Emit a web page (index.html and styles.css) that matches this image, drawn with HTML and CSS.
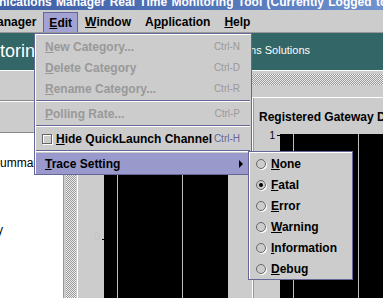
FILE: index.html
```html
<!DOCTYPE html>
<html>
<head>
<meta charset="utf-8">
<link rel="stylesheet" href="styles.css">
</head>
<body>
<div class="app">
  <div class="titlebar"><span class="title-text">nications Manager Real Time Monitoring Tool (Currently Logged to: 10.0.0.1)</span></div>
  <div class="menubar">
    <span class="mb-item first">Manager</span>
    <span class="mb-item active"><u>E</u>dit</span>
    <span class="mb-item"><u>W</u>indow</span>
    <span class="mb-item">A<u>p</u>plication</span>
    <span class="mb-item"><u>H</u>elp</span>
  </div>
  <div class="banner">
    <span class="banner-title">Monitoring</span>
    <span class="banner-sub">Communications Solutions</span>
  </div>
  <div class="main">
    <div class="tree">
      <div class="tree-head">
        <div class="tree-tool"></div>
        <div class="tree-tool"></div>
      </div>
      <div class="tree-body">
        <div class="tree-row r1">Summary</div>
        <div class="tree-row r2">y</div>
      </div>
    </div>
    <div class="vsplit"><div class="bumps"></div></div>
    <div class="right">
      <div class="hsplit"><div class="bumps"></div></div>
      <div class="charts">
        <div class="chart chart1">
          <div class="axis"><span class="axis-label zero">0</span><span class="tick tick1"></span></div>
          <div class="plot"><i class="grid g1"></i><i class="grid g2"></i></div>
          <div class="chart-margin"></div>
        </div>
        <div class="chart chart2">
          <div class="chart-title">Registered Gateway Devices</div>
          <div class="chart-body">
            <div class="axis axis2"><span class="axis-label one">1</span><span class="tick"></span></div>
            <div class="plot plot2"><i class="grid g3"></i><i class="grid g4"></i></div>
          </div>
        </div>
      </div>
    </div>
  </div>

  <div class="menu edit-menu">
    <div class="mi disabled"><span class="lbl"><u>N</u>ew Category...</span><span class="acc">Ctrl-N</span></div>
    <div class="mi disabled"><span class="lbl"><u>D</u>elete Category</span><span class="acc">Ctrl-D</span></div>
    <div class="mi disabled"><span class="lbl"><u>R</u>ename Category...</span><span class="acc">Ctrl-R</span></div>
    <div class="sep"></div>
    <div class="mi disabled"><span class="lbl"><u>P</u>olling Rate...</span><span class="acc">Ctrl-P</span></div>
    <div class="sep"></div>
    <div class="mi check"><span class="cb"></span><span class="lbl"><u>H</u>ide QuickLaunch Channel</span><span class="acc">Ctrl-H</span></div>
    <div class="sep"></div>
    <div class="mi sel"><span class="lbl"><u>T</u>race Setting</span><span class="arrow"></span></div>
  </div>

  <div class="menu sub-menu">
    <div class="ri"><span class="radio"></span><span><u>N</u>one</span></div>
    <div class="ri"><span class="radio on"></span><span><u>F</u>atal</span></div>
    <div class="ri"><span class="radio"></span><span><u>E</u>rror</span></div>
    <div class="ri"><span class="radio"></span><span><u>W</u>arning</span></div>
    <div class="ri"><span class="radio"></span><span><u>I</u>nformation</span></div>
    <div class="ri"><span class="radio"></span><span><u>D</u>ebug</span></div>
  </div>
</div>
</body>
</html>
```

FILE: styles.css
```css
* { box-sizing: border-box; }
html, body { margin: 0; padding: 0; }
body {
  width: 383px;
  height: 298px;
  overflow: hidden;
  background: #cccccc;
  font-family: "Liberation Sans", Arial, sans-serif;
}
.app {
  position: relative;
  width: 383px;
  height: 298px;
  overflow: hidden;
  display: flex;
  flex-direction: column;
}
.titlebar {
  height: 10px;
  flex: none;
  overflow: hidden;
  background: linear-gradient(90deg, #3f5fa8 0%, #5577bb 60%, #7093cf 100%);
}
.title-text {
  display: block;
  margin-top: -5px;
  margin-left: -1px;
  color: #ffffff;
  font: bold 12px/14px "Liberation Sans", Arial, sans-serif;
  word-spacing: 1px;
  white-space: nowrap;
}
.menubar {
  height: 23px;
  flex: none;
  display: flex;
  background: #cccccc;
  border-bottom: 1px solid #999999;
  font: bold 12px "Liberation Sans", Arial, sans-serif;
}
.mb-item {
  display: flex;
  align-items: center;
  padding: 0 7px;
  margin-top: 2px;
  color: #000;
}
.mb-item u { text-underline-offset: 1px; }
.mb-item.first { margin-left: -13px; padding-left: 0; }
.mb-item.active {
  background: #a3a3d3;
  border: 1px solid #666699;
  border-bottom: none;
  padding: 0 5px 0 5px;
  margin-left: 0;
}
.banner {
  height: 37px;
  flex: none;
  background: #336666;
  display: flex;
  align-items: flex-end;
  color: #fff;
}
.banner-title {
  font: 18px "Liberation Sans", Arial, sans-serif;
  margin-left: -39px;
  margin-bottom: 8px;
}
.banner-sub {
  margin-left: auto;
  margin-right: 73px;
  margin-bottom: 14px;
  font: 11px "Liberation Sans", Arial, sans-serif;
}
.main {
  flex: 1;
  display: flex;
  border-top: 1px solid #ffffff;
}
.tree {
  width: 64px;
  flex: none;
  display: flex;
  flex-direction: column;
  border-right: 1px solid #999999;
}
.tree-head {
  height: 62px;
  flex: none;
  border-bottom: 1px solid #888888;
}
.tree-tool {
  height: 30px;
  border-bottom: 1px solid #888888;
  box-shadow: 0 1px 0 #ffffff;
}
.tree-tool + .tree-tool { border-bottom: none; box-shadow: none; }
.tree-body {
  flex: 1;
  background: #ffffff;
  font: 12px "Liberation Sans", Arial, sans-serif;
  color: #000;
}
.tree-row { white-space: nowrap; }
.tree-row.r1 { margin-top: 23px; margin-left: -8px; }
.tree-row.r2 { margin-top: 53px; margin-left: -3px; }
.vsplit {
  width: 14px;
  flex: none;
  padding: 0 1px 0 2px;
  border-right: 1px solid #ffffff;
}
.bumps {
  width: 100%;
  height: 100%;
  background-color: #d8d8d8;
  background-image: repeating-conic-gradient(#9a9a9a 0 25%, #ececec 0 50%);
  background-size: 2px 2px;
}
.right {
  flex: 1;
  display: flex;
  flex-direction: column;
}
.hsplit {
  height: 15px;
  flex: none;
  padding: 3px 0 1px 0;
}
.charts {
  flex: 1;
  display: flex;
}
.chart {
  display: flex;
}
.chart1 {
  width: 172px;
  padding-top: 30px;
}
.axis {
  width: 26px;
  position: relative;
}
.axis-label {
  position: absolute;
  font: 10px "Liberation Sans", Arial, sans-serif;
}
.axis-label.zero { color: #c4c4c4; right: 4px; top: 115px; }
.plot {
  background: #000;
  position: relative;
}
.chart1 .plot { width: 124px; }
.chart-margin { flex: 1; }
.grid {
  position: absolute;
  top: 0;
  bottom: 0;
  width: 1px;
  background: #bdbdbd;
}
.g1 { left: 13px; }
.g2 { left: 78px; }
.chart2 {
  flex: 1;
  flex-direction: column;
  border-left: 1px solid #ffffff;
  margin-left: 2px;
  box-shadow: inset 1px 0 0 #999;
  border-top: 1px solid #ffffff;
  margin-top: 11px;
}
.chart-title {
  font: bold 12px "Liberation Sans", Arial, sans-serif;
  padding: 12px 0 0 6px;
  white-space: nowrap;
  height: 36px;
  color: #000;
}
.chart-body {
  flex: 1;
  display: flex;
  padding-left: 4px;
}
.axis2 { width: 23px; }
.axis-label.one { color: #000; right: 5px; top: -4px; }
.tick { position: absolute; right: 0; top: 1px; width: 3px; height: 1px; background: #000; }
.tick.tick1 { top: 123px; right: -1px; }
.plot2 { flex: 1; }
.g3 { left: 13px; }
.g4 { left: 78px; }

/* menus */
.menu {
  position: absolute;
  background: #cccccc;
  border: 1px solid #666699;
  box-shadow: inset 1px 1px 0 #ffffff;
  font: bold 12px "Liberation Sans", Arial, sans-serif;
}
.edit-menu {
  left: 34px;
  top: 33px;
  width: 218px;
  padding: 2px 1px 0 1px;
}
.mi {
  height: 21px;
  display: flex;
  align-items: center;
  padding: 0 10px 0 9px;
  color: #000;
}
.mi .lbl { flex: 1; white-space: nowrap; }
.mi .acc {
  font: 10px "Liberation Sans", Arial, sans-serif;
  color: #666699;
}
.mi.disabled .lbl, .mi.disabled .acc { color: #999999; }
.mi.check { padding-left: 6px; }
.cb {
  width: 10px;
  height: 10px;
  border: 1px solid #666666;
  box-shadow: inset 1px 1px 0 #ffffff, 1px 1px 0 #ffffff;
  margin-right: 4px;
  flex: none;
}
.mi.sel { background: #9999cc; }
.arrow {
  width: 0;
  height: 0;
  border-top: 4px solid transparent;
  border-bottom: 4px solid transparent;
  border-left: 4px solid #000;
  margin-right: -3px;
}
.sep {
  height: 4px;
  background: linear-gradient(to bottom, transparent 0 1px, #666699 1px 2px, #ffffff 2px 3px, transparent 3px);
}
.sub-menu {
  left: 248px;
  top: 151px;
  width: 105px;
  padding: 1px 1px 0 1px;
}
.ri {
  height: 21px;
  display: flex;
  align-items: center;
  padding-left: 6px;
  color: #000;
  white-space: nowrap;
}
.radio {
  width: 10px;
  height: 10px;
  border-radius: 50%;
  border: 1px solid #666666;
  box-shadow: 1px 1px 0 #ffffff;
  margin-right: 5px;
  flex: none;
  position: relative;
  background: #cccccc;
}
.radio.on::after {
  content: "";
  position: absolute;
  left: 2px;
  top: 2px;
  width: 4px;
  height: 4px;
  border-radius: 50%;
  background: #000;
}
```
